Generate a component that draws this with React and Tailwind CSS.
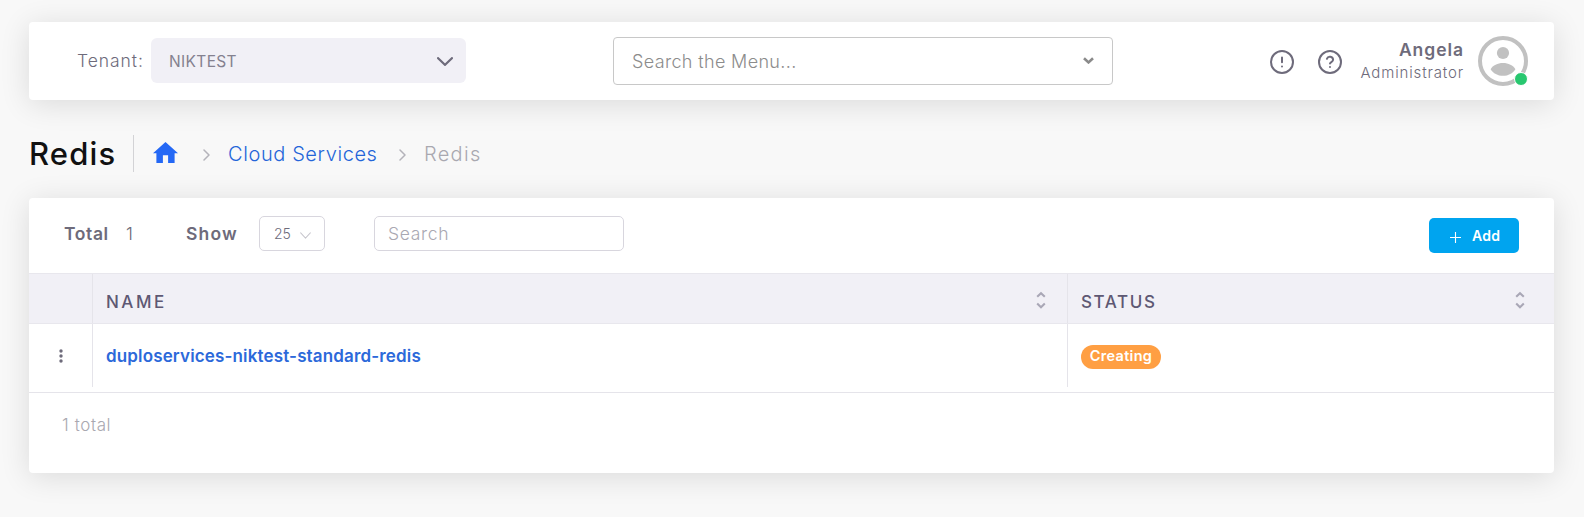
function Chevron({ className, width = 2 }) {
  return (
    <svg className={className} viewBox="0 0 16 8" preserveAspectRatio="none" fill="none" stroke="currentColor" strokeWidth={width} strokeLinecap="round" strokeLinejoin="round">
      <path d="M1 1l7 6 7-6" />
    </svg>
  );
}

function CrumbArrow() {
  return (
    <svg className="mt-[3px] h-3 w-[7px] text-[#b4b3ba]" viewBox="0 0 7 12" fill="none" stroke="currentColor" strokeWidth="1.5" strokeLinecap="round" strokeLinejoin="round">
      <path d="M1 1l5 5-5 5" />
    </svg>
  );
}

function SortIcon() {
  return (
    <svg className="mt-[3px] h-[18px] w-[10px] shrink-0 text-[#a9a7b6]" viewBox="0 0 10 18" fill="none" stroke="currentColor" strokeWidth="2.1">
      <path d="M1.200 5.800L5 2.200l3.800 3.600M1.200 12.600L5 16.200l3.800-3.600" />
    </svg>
  );
}

function RoundIcon({ d }) {
  return (
    <svg className="size-6 text-[#6e6b7b]" viewBox="0 0 24 24" fill="none" stroke="currentColor" strokeWidth="2" strokeLinecap="round" strokeLinejoin="round">
      <circle cx="12" cy="12" r="11" />
      <path d={d} />
    </svg>
  );
}

function Avatar() {
  return (
    <div className="relative ml-[15px] size-[50px]">
      <svg className="size-[50px]" viewBox="0 0 50 50">
        <circle cx="25" cy="25" r="23" fill="#fff" stroke="#c1c1c1" strokeWidth="4" />
        <circle cx="25" cy="17" r="6.1" fill="#c1c1c1" />
        <path d="M12.600 33.200C15 29.300 19.500 27 25 27s10 2.300 12.400 6.200C34.800 37.300 30.300 39.800 25 39.800s-9.800-2.500-12.400-6.600z" fill="#c1c1c1" />
      </svg>
      <span className="absolute right-0 bottom-0 size-[14px] rounded-full border border-white bg-[#28c76f]" />
    </div>
  );
}

function TopBar() {
  return (
    <header className="flex h-[78px] items-center rounded bg-white pl-[49px] pr-[26px] shadow-[0_4px_30px_rgba(0,0,0,0.12)]">
      <span className="-ml-px w-[74px] text-[17.500px] font-light tracking-[0.950px] text-[#6e6b7b]">Tenant:</span>
      <div className="-mt-px flex h-[45px] w-[315px] items-center justify-between rounded-md bg-[#f1f0f6] pl-[18px] pr-[13px] text-[#6e6b7b]">
        <span className="pt-0.5 text-[15.500px] tracking-[0.350px] text-[#84818f]">NIKTEST</span>
        <Chevron className="mt-px h-[9px] w-4" width={2} />
      </div>
      <div className="ml-[147px] flex h-12 w-[500px] items-center justify-between rounded border border-[#c8c8c8] px-[18px]">
        <span className="text-[18px] font-light tracking-[0.350px] text-[#8c8c8c]">Search the Menu...</span>
        <svg className="-mt-px h-[7px] w-[11px] text-[#8a8a8a]" viewBox="0 0 11 7" fill="none" stroke="currentColor" strokeWidth="2.6">
          <path d="M1 1.200l4.500 4.200L10 1.200" />
        </svg>
      </div>
      <div className="ml-auto flex items-center">
        <div className="mt-0.5 mr-[18.500px] flex gap-6">
          <RoundIcon d="M12 7.500v4.700M12 16.500v.1" />
          <RoundIcon d="M8.900 8.800a3.200 3.200 0 0 1 6.200 1c0 2.100-3.100 2.300-3.100 3.800M12 16.900v.1" />
        </div>
        <div className="flex flex-col items-end text-[#6e6b7b]">
          <span className="-mr-px text-[17.500px] leading-[24px] font-semibold tracking-[0.950px]">Angela</span>
          <span className="-mr-px text-[15px] leading-[22px] font-light tracking-[0.850px]">Administrator</span>
        </div>
        <Avatar />
      </div>
    </header>
  );
}

function Breadcrumbs() {
  return (
    <div className="mt-[35px] flex h-[37px] items-center">
      <h1 className="w-[105px] border-r border-[#d3d3d6] text-[31px] leading-[37px] font-medium tracking-[1.150px] text-[#111]">Redis</h1>
      <nav className="flex items-center text-[20px] leading-[30px] font-light">
        <svg className="-mt-[3px] ml-[19px] h-[21px] w-[25px]" viewBox="0 0 25 21" fill="#2468f5">
          <path d="M12.500 0L25 11.200h-3.400V21h-6.500v-7.800h-5.200V21H3.400v-9.800H0z" />
        </svg>
        <span className="w-[50px] pl-[25px]"><CrumbArrow /></span>
        <a className="w-[148px] pt-px tracking-[0.600px] whitespace-nowrap text-[#2465d9]">Cloud Services</a>
        <span className="w-[48px] pl-[23px]"><CrumbArrow /></span>
        <span className="pt-px tracking-[1.300px] text-[#a9a8b0]">Redis</span>
      </nav>
    </div>
  );
}

function Toolbar() {
  return (
    <div className="flex h-[76px] items-start border-b border-[#e8e7ed] pt-[18px] pl-[35px] pr-[35px] text-[17.500px] text-[#6e6b7b]">
      <div className="flex h-[37px] items-center">
        <span className="w-[62px] font-semibold tracking-[0.600px]">Total</span>
        <span className="w-[60px] font-light">1</span>
        <span className="w-[73px] font-semibold tracking-[1.200px]">Show</span>
      </div>
      <div className="flex h-[35px] w-[66px] items-center justify-between rounded-[5px] border border-[#d8d6de] pl-[14px] pr-[13px]">
        <span className="text-[14px] font-light">25</span>
        <Chevron className="mt-1 h-[7px] w-[11px] text-[#c6c5cc]" width={1.500} />
      </div>
      <div className="ml-[49px] flex h-[35px] w-[250px] items-center rounded-[5px] border border-[#d8d6de] pl-[13px]">
        <span className="pt-0.5 font-light tracking-[0.700px] text-[#a9a8b2]">Search</span>
      </div>
      <button className="mt-0.5 ml-auto flex h-[35px] w-[90px] items-center rounded-[5px] bg-[#00a4ef] pl-[21px] text-white">
        <svg className="mt-[3px] mr-[11px] size-[11px]" viewBox="0 0 11 11" stroke="currentColor" strokeWidth="1.1">
          <path d="M5.500 0v11M0 5.500h11" />
        </svg>
        <span className="text-[14px] font-semibold tracking-[0.300px]">Add</span>
      </button>
    </div>
  );
}

const columns = 'grid grid-cols-[63px_975px_1fr]';

function Table() {
  return (
    <div>
      <div className={`${columns} h-[50px] border-b border-[#e8e7ed] bg-[#f1f0f6] text-[17px] font-medium text-[#5e5873]`}>
        <div />
        <div className="flex items-center justify-between border-l border-[#e5e4ea] pl-[13px] pr-[21px]">
          <span className="pt-2 tracking-[2.500px]">NAME</span>
          <SortIcon />
        </div>
        <div className="flex items-center justify-between border-l border-[#e5e4ea] pl-[13px] pr-[29px]">
          <span className="pt-2 tracking-[1.600px]">STATUS</span>
          <SortIcon />
        </div>
      </div>
      <div className="h-[69px] border-b border-[#e5e4ea]">
        <div className={`${columns} h-[63px]`}>
          <div className="flex items-center">
            <svg className="ml-[29.500px] h-[14px] w-1" viewBox="0 0 4 14" fill="#6e6b7b">
              <circle cx="2" cy="2" r="1.700" />
              <circle cx="2" cy="7" r="1.700" />
              <circle cx="2" cy="12" r="1.700" />
            </svg>
          </div>
          <div className="flex items-center border-l border-[#e5e4ea] pl-[13px]">
            <a className="pt-[3px] text-[17px] font-semibold tracking-[0.150px] text-[#2c69da]">duploservices-niktest-standard-redis</a>
          </div>
          <div className="flex items-center border-l border-[#e5e4ea] pl-[13px]">
            <span className="mt-[3px] flex h-6 w-20 items-center justify-center rounded-full bg-[#ff9f43] pb-0.5 text-[14.500px] font-semibold tracking-[0.300px] text-white">Creating</span>
          </div>
        </div>
      </div>
    </div>
  );
}

export default function App() {
  return (
    <main className="min-h-[517px] bg-[#f8f8f8] pt-[22px] pr-[30px] pl-[29px] font-['Inter',sans-serif]">
      <TopBar />
      <Breadcrumbs />
      <section className="mt-[26px] h-[275px] overflow-hidden rounded bg-white shadow-[0_4px_30px_rgba(0,0,0,0.12)]">
        <Toolbar />
        <Table />
        <p className="pt-[20px] pl-[33px] text-[17px] leading-6 font-light tracking-[0.600px] text-[#a9a8b0]">1 total</p>
      </section>
    </main>
  );
}
